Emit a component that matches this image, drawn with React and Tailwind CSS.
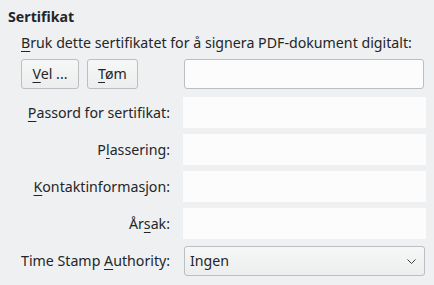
// accelerator letter, underlined like a Qt mnemonic
function Acc({ children }) {
  return <u className="underline decoration-1 underline-offset-[3px]">{children}</u>;
}

function Field() {
  return <div className="h-[31px] bg-[#fcfcfc]" />;
}

function Row({ label, children, className = "" }) {
  return (
    <div className={`flex items-center ${className}`}>
      <div className="w-[150px] text-right pr-[1px] whitespace-nowrap">{label}</div>
      <div className="ml-[12px] w-[243px]">{children}</div>
    </div>
  );
}

export default function App() {
  return (
    <div
      className="w-[434px] h-[285px] bg-[#eff0f1] text-[#232629] text-[14.2px] leading-[20px] overflow-hidden"
      style={{ fontFamily: '"Noto Sans", "DejaVu Sans", sans-serif' }}
    >
      <div className="pt-[7px] pl-[8px] font-bold">Sertifikat</div>

      <div className="pl-[21px]">
        <p className="mt-[6px] whitespace-nowrap">
          <Acc>B</Acc>ruk dette sertifikatet for å signera PDF-dokument digitalt:
        </p>

        {/* choose / clear + selected cert */}
        <div className="mt-[6px] flex items-center h-[30px]">
          <div className="w-[150px] flex gap-[8px]">
            <button className="w-[58px] h-[30px] rounded-[3px] border border-[#bcbebf] bg-gradient-to-b from-[#f6f7f7] to-[#eceded]">
              <Acc>V</Acc>el ...
            </button>
            <button className="w-[51px] h-[30px] rounded-[3px] border border-[#bcbebf] bg-gradient-to-b from-[#f6f7f7] to-[#eceded]">
              <Acc>T</Acc>øm
            </button>
          </div>
          <div className="ml-[13px] w-[240px] h-[30px] rounded-[3px] border border-[#bcbebf] bg-[#fcfcfc]" />
        </div>

        <div className="mt-[8px] flex flex-col gap-[6px]">
          <Row label={<><Acc>P</Acc>assord for sertifikat:</>}>
            <Field />
          </Row>
          <Row label={<>P<Acc>l</Acc>assering:</>}>
            <Field />
          </Row>
          <Row label={<><Acc>K</Acc>ontaktinformasjon:</>}>
            <Field />
          </Row>
          <Row label={<>År<Acc>s</Acc>ak:</>}>
            <Field />
          </Row>
          <Row label={<>Time Stamp <Acc>A</Acc>uthority:</>} className="mt-[1px]">
            <div className="ml-[1px] w-[241px] h-[30px] rounded-[3px] border border-[#bcbebf] bg-gradient-to-b from-[#f6f7f7] to-[#eceded] flex items-center justify-between pl-[5px] pr-[8px]">
              <span>Ingen</span>
              <svg width="9" height="5" viewBox="0 0 9 5" className="mt-[1px]">
                <path d="M0.5 0.5 L4.5 4.5 L8.5 0.5" fill="none" stroke="#3b3f42" strokeWidth="1" />
              </svg>
            </div>
          </Row>
        </div>
      </div>
    </div>
  );
}
